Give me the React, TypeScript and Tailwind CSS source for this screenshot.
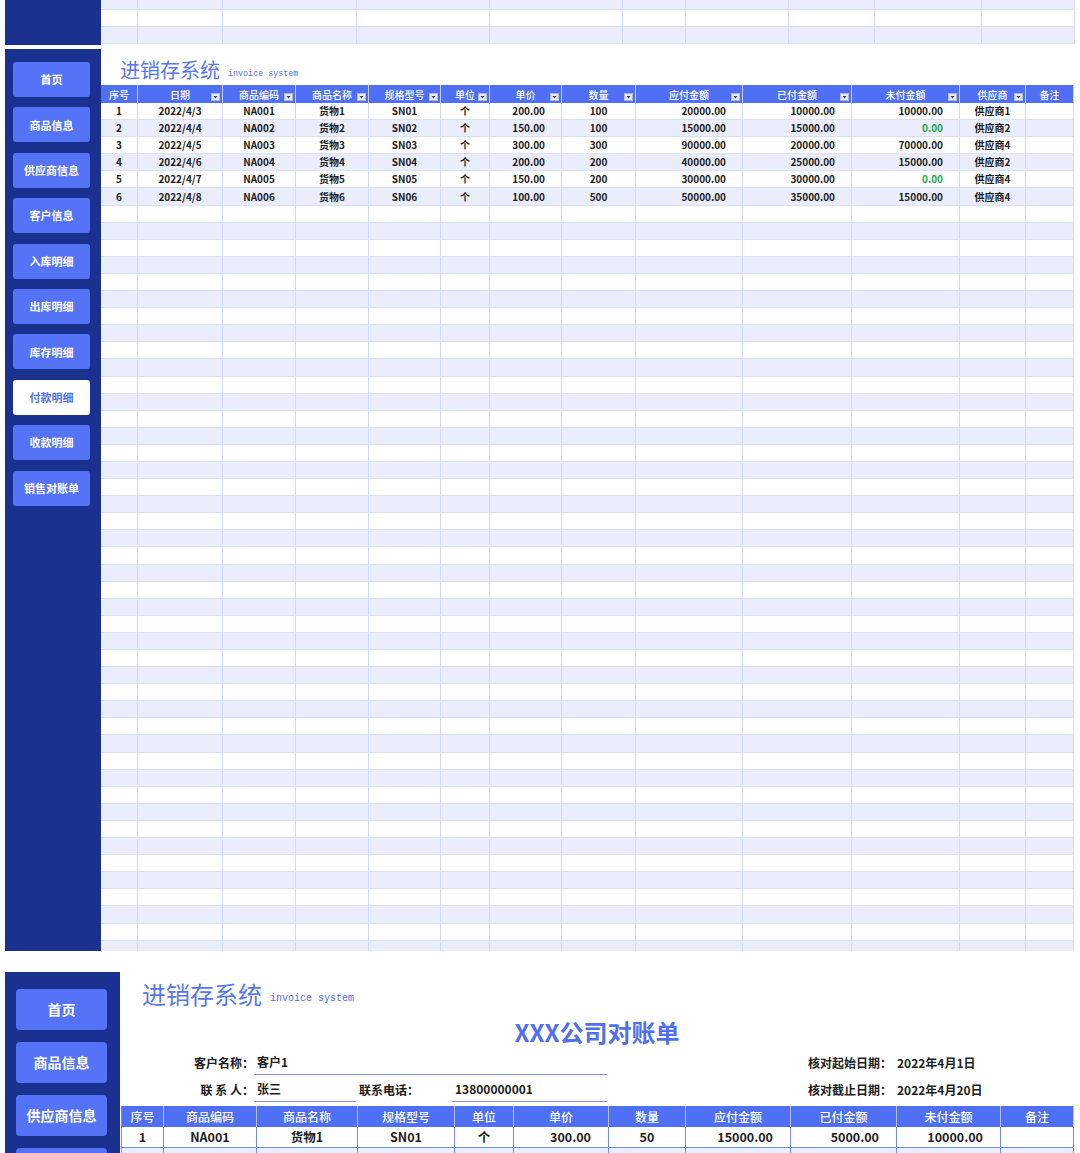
import React from 'react';

const NAVY = 'bg-[#1a3190]';

const mainCols =
  'grid grid-cols-[37px_85px_73px_73px_72px_49px_72px_74px_107px_109px_108px_66px_48px]';
const stripCols = 'grid grid-cols-[37px_85px_134px_133px_133px_63px_103px_86px_107px_93px]';
const billCols = 'grid grid-cols-[42px_93px_101px_97px_59px_95px_77px_105px_106px_104px_73px]';

const MAIN_HEAD = ['序号', '日期', '商品编码', '商品名称', '规格型号', '单位', '单价', '数量', '应付金额', '已付金额', '未付金额', '供应商', '备注'];
// r = right aligned amount, c = centered
const MAIN_ALIGN = ['c', 'c', 'c', 'c', 'c', 'c', 'r', 'c', 'r', 'r', 'r', 'c', 'c'];

const PAYMENTS = [
  ['1', '2022/4/3', 'NA001', '货物1', 'SN01', '个', '200.00', '100', '20000.00', '10000.00', '10000.00', '供应商1', ''],
  ['2', '2022/4/4', 'NA002', '货物2', 'SN02', '个', '150.00', '100', '15000.00', '15000.00', '0.00', '供应商2', ''],
  ['3', '2022/4/5', 'NA003', '货物3', 'SN03', '个', '300.00', '300', '90000.00', '20000.00', '70000.00', '供应商4', ''],
  ['4', '2022/4/6', 'NA004', '货物4', 'SN04', '个', '200.00', '200', '40000.00', '25000.00', '15000.00', '供应商2', ''],
  ['5', '2022/4/7', 'NA005', '货物5', 'SN05', '个', '150.00', '200', '30000.00', '30000.00', '0.00', '供应商4', ''],
  ['6', '2022/4/8', 'NA006', '货物6', 'SN06', '个', '100.00', '500', '50000.00', '35000.00', '15000.00', '供应商4', ''],
];

const BILL_HEAD = ['序号', '商品编码', '商品名称', '规格型号', '单位', '单价', '数量', '应付金额', '已付金额', '未付金额', '备注'];
const BILL_ALIGN = ['c', 'c', 'c', 'c', 'c', 'r', 'c', 'r', 'r', 'r', 'c'];
// second row only peeks in at the bottom edge, so it is left blank
const BILL_ROWS = [
  ['1', 'NA001', '货物1', 'SN01', '个', '300.00', '50', '15000.00', '5000.00', '10000.00', ''],
  Array(11).fill(''),
];

const MENU = ['首页', '商品信息', '供应商信息', '客户信息', '入库明细', '出库明细', '库存明细', '付款明细', '收款明细', '销售对账单'];

function FilterIcon() {
  return (
    <svg width="9" height="8" viewBox="0 0 9 8" className="absolute right-[2px] bottom-[2px]">
      <rect x="0.5" y="0.5" width="8" height="7" fill="#e4e7ef" stroke="#b3b9c9" />
      <polygon points="2.5,3 6.5,3 4.5,5.5" fill="#3b3f4a" />
    </svg>
  );
}

function Logo({ big }: { big?: boolean }) {
  return (
    <div className="flex items-end gap-[8px]">
      <span className={big ? 'text-[24px] leading-[24px] text-[#5877ea]' : 'text-[20px] leading-[20px] text-[#5877ea]'}>
        进销存系统
      </span>
      <span
        className={
          big
            ? "font-['Liberation_Mono',monospace] text-[10px] leading-[14px] text-[#4d6ce6]"
            : "font-['Liberation_Mono',monospace] text-[8.4px] leading-[12px] text-[#4d6ce6]"
        }
      >
        invoice system
      </span>
    </div>
  );
}

function TopStrip() {
  const rows = ['h-[10px] bg-[#e9edfc]', 'h-[17px] bg-white', 'h-[17px] bg-[#e9edfc]'];
  return (
    <div className="flex h-[45px] pl-[5px]">
      <div className={`w-[96px] h-[45px] ${NAVY}`} />
      <div className="w-[974px]">
        {rows.map((r, i) => (
          <div key={i} className={`${stripCols} ${r} border-b border-[#d9dff8]`}>
            {Array.from({ length: 10 }).map((_, j) => (
              <div key={j} className="border-r border-[#d3daf6]" />
            ))}
          </div>
        ))}
      </div>
    </div>
  );
}

function PaymentSheet() {
  const empty = Array.from({ length: 48 }, () => Array(13).fill(''));
  const rows = [...PAYMENTS, ...empty];
  return (
    <div className="flex h-[902px] pl-[5px] overflow-hidden">
      <div className={`w-[96px] shrink-0 ${NAVY} pl-[8px] pt-[13px] flex flex-col gap-[10.4px]`}>
        {MENU.map((m) => (
          <div
            key={m}
            className={
              m === '付款明细'
                ? 'w-[77px] h-[35px] rounded-[3px] bg-white text-[#4f6ff0] text-[11px] font-bold flex items-center justify-center'
                : 'w-[77px] h-[35px] rounded-[3px] bg-[#5473f6] text-white text-[11px] font-bold flex items-center justify-center'
            }
          >
            {m}
          </div>
        ))}
      </div>
      <div className="w-[973px]">
        <div className="pl-[19px] pt-[11px] h-[36px]">
          <Logo />
        </div>
        <div className={`${mainCols} h-[18px] bg-[#4f6ff5]`}>
          {MAIN_HEAD.map((h, i) => (
            <div
              key={h}
              className="relative flex items-center justify-center text-white text-[10px] font-medium border-r border-[#c2cdfb]"
            >
              {h}
              {i > 0 && i < 12 && <FilterIcon />}
            </div>
          ))}
        </div>
        {rows.map((r, ri) => (
          <div
            key={ri}
            className={`${mainCols} h-[17.1px] border-b border-[#d9dff8] ${ri % 2 === 1 ? 'bg-[#e9edfc]' : 'bg-white'}`}
          >
            {r.map((c: string, ci: number) => (
              <div
                key={ci}
                className={`flex items-center border-r border-[#d3daf6] text-[10px] font-bold leading-none ${
                  MAIN_ALIGN[ci] === 'r' ? 'justify-end pr-[16px]' : 'justify-center'
                } ${c === '0.00' ? 'text-[#22a447]' : 'text-[#1c1c1c]'}`}
              >
                {c}
              </div>
            ))}
          </div>
        ))}
      </div>
    </div>
  );
}

function Field({ w, value }: { w: string; value: string }) {
  return <div className={`${w} border-b border-[#7b90f0] pl-[3px] leading-[24px]`}>{value}</div>;
}

function StatementSheet() {
  return (
    <div className="flex pl-[5px]">
      <div className={`w-[115px] h-[190px] shrink-0 ${NAVY} pl-[11px] pt-[17px] flex flex-col gap-[12px]`}>
        {MENU.slice(0, 3).map((m) => (
          <div
            key={m}
            className="w-[91px] h-[41px] shrink-0 rounded-[4px] bg-[#5473f6] text-white text-[14px] font-bold flex items-center justify-center"
          >
            {m}
          </div>
        ))}
        <div className="w-[91px] h-[41px] shrink-0 rounded-[4px] bg-[#5473f6]" />
      </div>
      <div className="w-[952px] ml-[1px]">
        <div className="pl-[21px] pt-[10px]">
          <Logo big />
        </div>
        <div className="mt-[12px] text-center text-[24px] leading-[28px] font-bold text-[#4f6ff0]">XXX公司对账单</div>

        <div className="mt-[2px] text-[12px] font-bold text-[#1c1c1c]">
          <div className="flex items-end h-[27px]">
            <div className="w-[133px] text-right leading-[24px]">客户名称：</div>
            <Field w="w-[353px]" value="客户1" />
            <div className="ml-[201px] w-[89px] leading-[24px]">核对起始日期：</div>
            <div className="leading-[24px]">2022年4月1日</div>
          </div>
          <div className="flex items-end h-[27px]">
            <div className="w-[133px] text-right leading-[24px]">联 系 人：</div>
            <Field w="w-[102px]" value="张三" />
            <div className="ml-[3px] w-[93px] leading-[24px]">联系电话：</div>
            <Field w="w-[155px]" value="13800000001" />
            <div className="ml-[201px] w-[89px] leading-[24px]">核对截止日期：</div>
            <div className="leading-[24px]">2022年4月20日</div>
          </div>
        </div>

        <div className="mt-[4px] border-l border-[#7088f2]">
          <div className={`${billCols} h-[21px] bg-[#4f6ff5]`}>
            {BILL_HEAD.map((h) => (
              <div
                key={h}
                className="flex items-center justify-center text-white text-[12px] font-medium border-r border-[#b4c2fb]"
              >
                {h}
              </div>
            ))}
          </div>
          {BILL_ROWS.map((r, ri) => (
            <div
              key={ri}
              className={`${billCols} h-[21px] border-b border-[#7088f2] ${ri % 2 === 1 ? 'bg-[#e9edfc]' : 'bg-white'}`}
            >
              {r.map((c: string, ci: number) => (
                <div
                  key={ci}
                  className={`flex items-center border-r border-[#7088f2] text-[12.5px] font-bold text-[#1c1c1c] ${
                    BILL_ALIGN[ci] === 'r' ? 'justify-end pr-[17px]' : 'justify-center'
                  }`}
                >
                  {c}
                </div>
              ))}
            </div>
          ))}
        </div>
      </div>
    </div>
  );
}

export default function App() {
  return (
    <div className="w-[1080px] h-[1153px] overflow-hidden bg-white font-['Noto_Sans_CJK_SC','Noto_Sans',sans-serif]">
      <TopStrip />
      <div className="h-[4px]" />
      <PaymentSheet />
      <div className="h-[21px]" />
      <StatementSheet />
    </div>
  );
}
